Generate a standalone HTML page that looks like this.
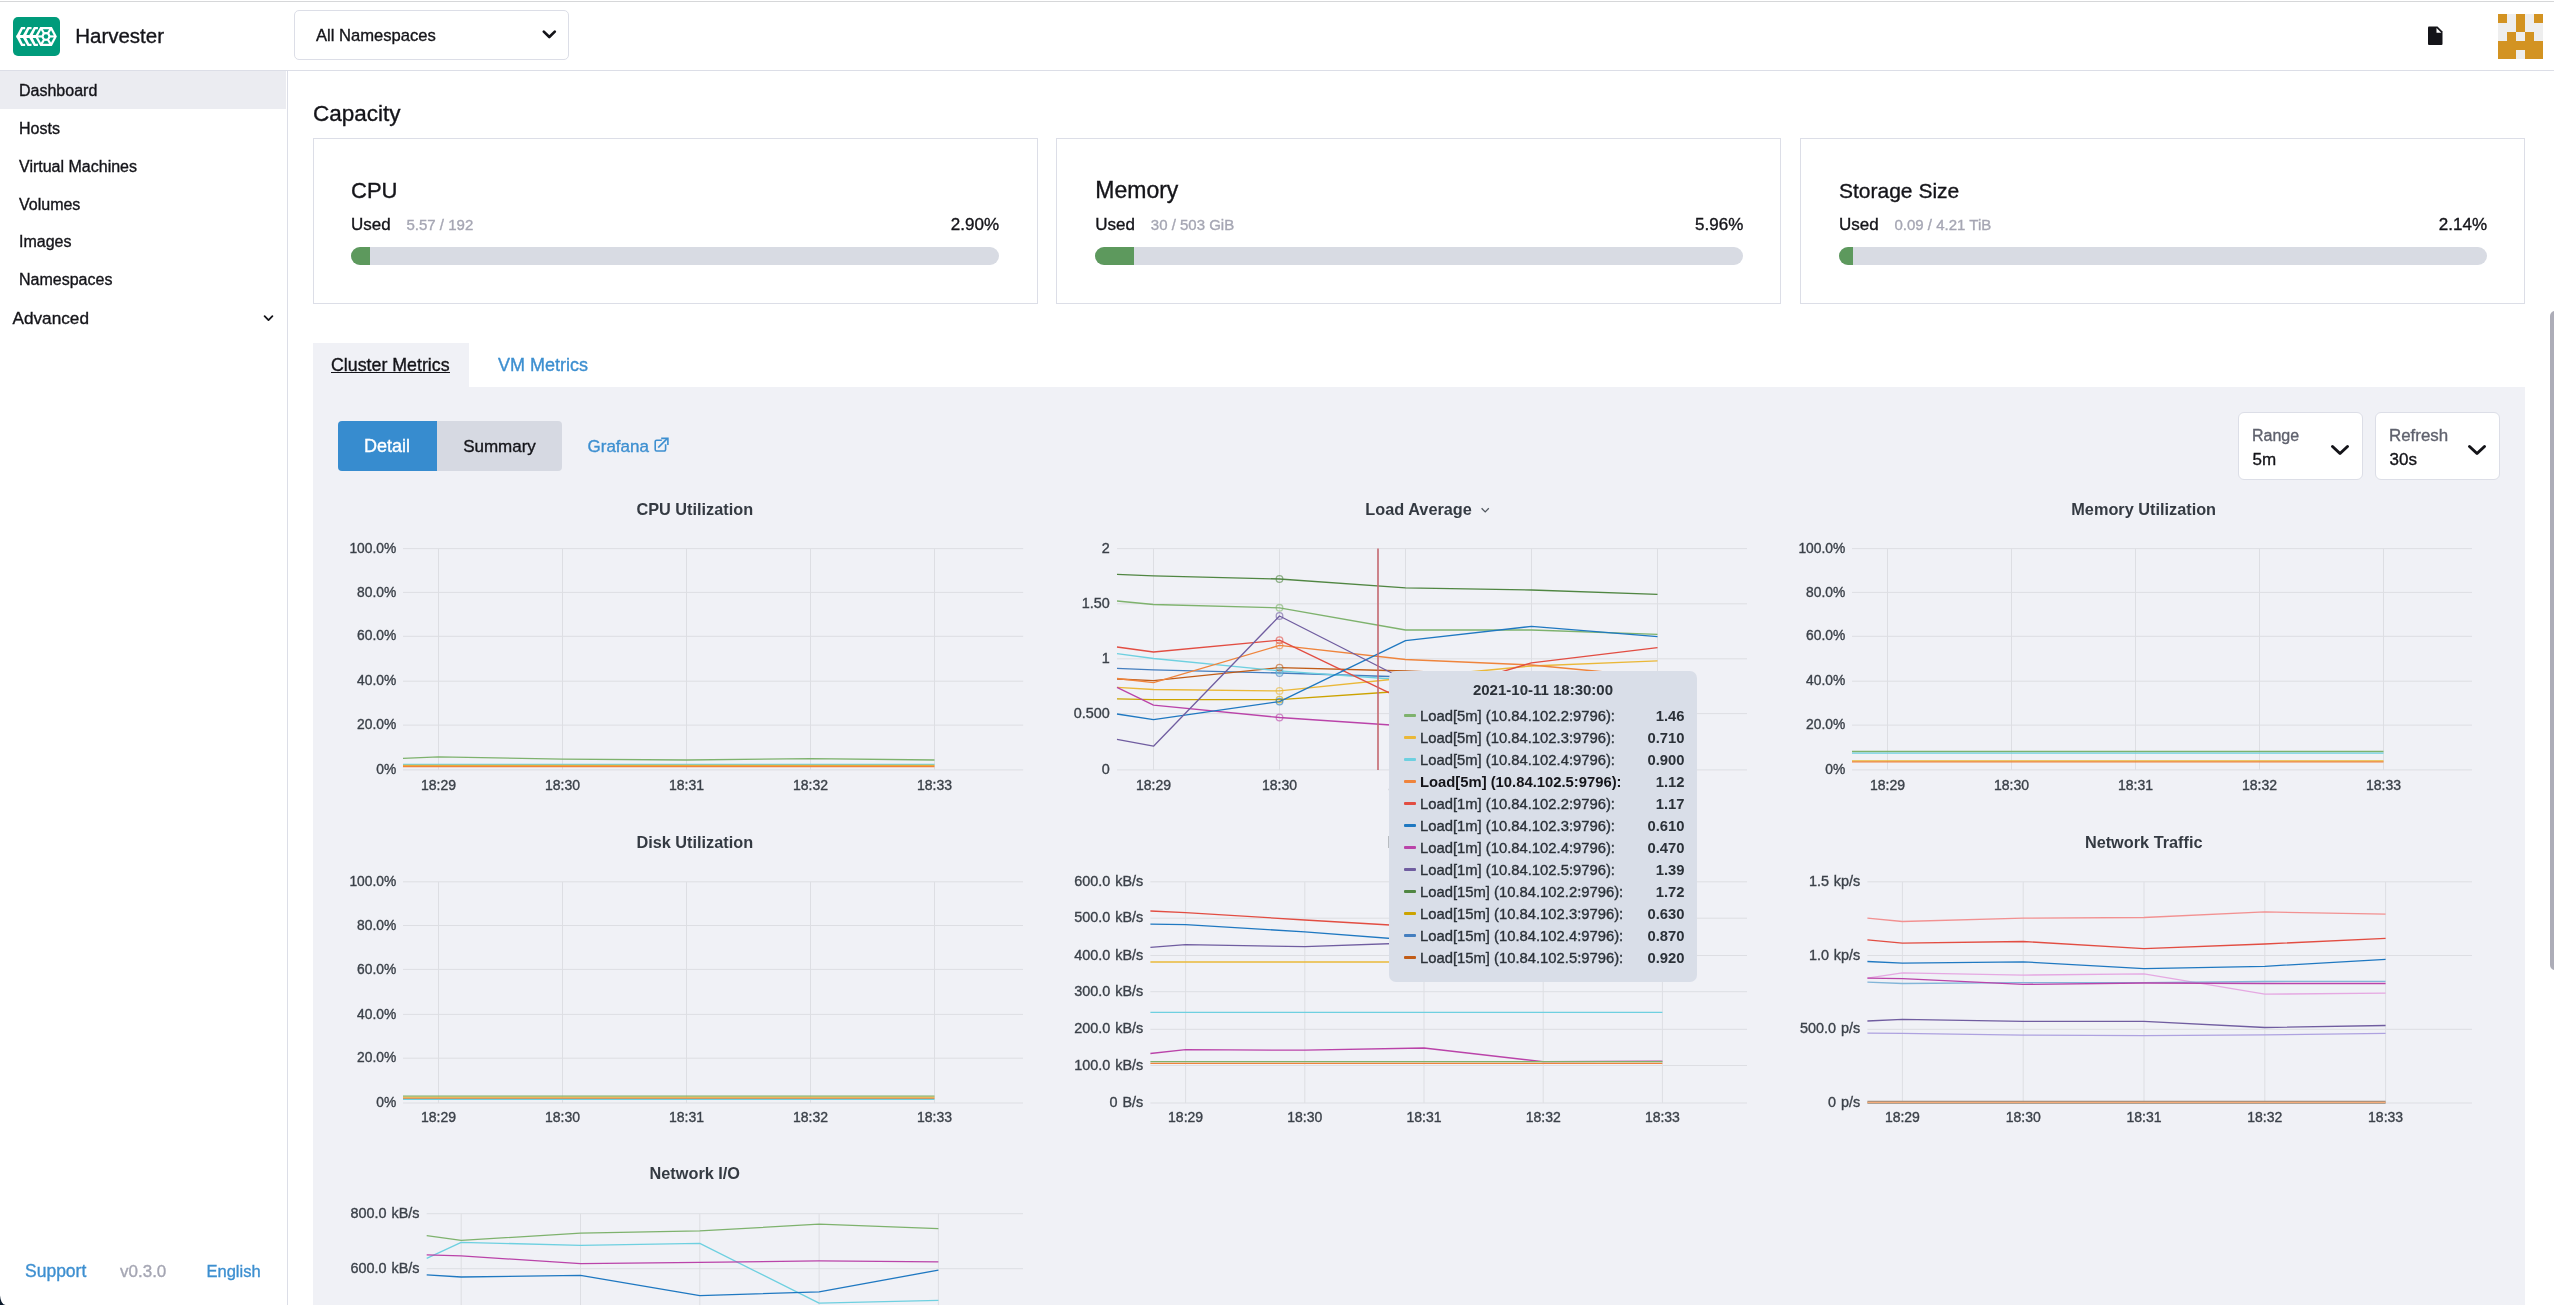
<!DOCTYPE html>
<html><head><meta charset="utf-8"><title>Harvester Dashboard</title>
<style>
html,body{margin:0;padding:0;}
body{width:2554px;height:1305px;overflow:hidden;position:relative;background:#fff;font-family:"Liberation Sans", sans-serif;}
svg text{font-family:"Liberation Sans", sans-serif;}
</style></head><body>
<div style="position:absolute;left:0px;top:1px;width:2554px;height:1px;background:#D6D7D9"></div><div style="position:absolute;left:0px;top:70px;width:2554px;height:1px;background:#DCDEE7"></div><div style="position:absolute;left:294px;top:10px;width:273px;height:48px;border:1px solid #DCDEE7;border-radius:5px;background:#fff"></div><div style="position:absolute;left:2498px;top:14px;width:9px;height:9px;background:#D39322"></div><div style="position:absolute;left:2507px;top:14px;width:9px;height:9px;background:#EEEEEE"></div><div style="position:absolute;left:2516px;top:14px;width:9px;height:9px;background:#D39322"></div><div style="position:absolute;left:2525px;top:14px;width:9px;height:9px;background:#EEEEEE"></div><div style="position:absolute;left:2534px;top:14px;width:9px;height:9px;background:#D39322"></div><div style="position:absolute;left:2498px;top:23px;width:9px;height:9px;background:#EEEEEE"></div><div style="position:absolute;left:2507px;top:23px;width:9px;height:9px;background:#EEEEEE"></div><div style="position:absolute;left:2516px;top:23px;width:9px;height:9px;background:#D39322"></div><div style="position:absolute;left:2525px;top:23px;width:9px;height:9px;background:#EEEEEE"></div><div style="position:absolute;left:2534px;top:23px;width:9px;height:9px;background:#EEEEEE"></div><div style="position:absolute;left:2498px;top:32px;width:9px;height:9px;background:#EEEEEE"></div><div style="position:absolute;left:2507px;top:32px;width:9px;height:9px;background:#D39322"></div><div style="position:absolute;left:2516px;top:32px;width:9px;height:9px;background:#EEEEEE"></div><div style="position:absolute;left:2525px;top:32px;width:9px;height:9px;background:#D39322"></div><div style="position:absolute;left:2534px;top:32px;width:9px;height:9px;background:#EEEEEE"></div><div style="position:absolute;left:2498px;top:41px;width:9px;height:9px;background:#D39322"></div><div style="position:absolute;left:2507px;top:41px;width:9px;height:9px;background:#D39322"></div><div style="position:absolute;left:2516px;top:41px;width:9px;height:9px;background:#D39322"></div><div style="position:absolute;left:2525px;top:41px;width:9px;height:9px;background:#D39322"></div><div style="position:absolute;left:2534px;top:41px;width:9px;height:9px;background:#D39322"></div><div style="position:absolute;left:2498px;top:50px;width:9px;height:9px;background:#D39322"></div><div style="position:absolute;left:2507px;top:50px;width:9px;height:9px;background:#D39322"></div><div style="position:absolute;left:2516px;top:50px;width:9px;height:9px;background:#EEEEEE"></div><div style="position:absolute;left:2525px;top:50px;width:9px;height:9px;background:#D39322"></div><div style="position:absolute;left:2534px;top:50px;width:9px;height:9px;background:#D39322"></div><div style="position:absolute;left:287px;top:71px;width:1px;height:1234px;background:#DCDEE7"></div><div style="position:absolute;left:0px;top:71px;width:286px;height:38px;background:#EBECF1"></div><div style="position:absolute;left:313px;top:138px;width:725px;height:166px;border:1px solid #DCDEE7;box-sizing:border-box;background:#fff"></div><div style="position:absolute;left:351px;top:247px;width:648px;height:18px;background:#D8DBE3;border-radius:9px"></div><div style="position:absolute;left:351px;top:247px;width:19px;height:18px;background:#5D995D;border-radius:9px 0 0 9px"></div><div style="position:absolute;left:1056px;top:138px;width:725px;height:166px;border:1px solid #DCDEE7;box-sizing:border-box;background:#fff"></div><div style="position:absolute;left:1095.3px;top:247px;width:648px;height:18px;background:#D8DBE3;border-radius:9px"></div><div style="position:absolute;left:1095.3px;top:247px;width:38.700000000000045px;height:18px;background:#5D995D;border-radius:9px 0 0 9px"></div><div style="position:absolute;left:1800px;top:138px;width:725px;height:166px;border:1px solid #DCDEE7;box-sizing:border-box;background:#fff"></div><div style="position:absolute;left:1839px;top:247px;width:648px;height:18px;background:#D8DBE3;border-radius:9px"></div><div style="position:absolute;left:1839px;top:247px;width:14px;height:18px;background:#5D995D;border-radius:9px 0 0 9px"></div><div style="position:absolute;left:313px;top:343px;width:156px;height:44px;background:#F0F1F6"></div><div style="position:absolute;left:313px;top:387px;width:2212px;height:918px;background:#F0F1F6"></div><div style="position:absolute;left:331px;top:372px;width:119px;height:1.3px;background:#141419"></div><div style="position:absolute;left:338px;top:421px;width:99px;height:50px;background:#378CCF;border-radius:4px 0 0 4px"></div><div style="position:absolute;left:437px;top:421px;width:125px;height:50px;background:#D6D9E2;border-radius:0 4px 4px 0"></div><div style="position:absolute;left:2238px;top:412px;width:125px;height:68px;border:1px solid #DCDEE7;box-sizing:border-box;border-radius:6px;background:#fff"></div><div style="position:absolute;left:2375px;top:412px;width:125px;height:68px;border:1px solid #DCDEE7;box-sizing:border-box;border-radius:6px;background:#fff"></div><div style="position:absolute;left:2550px;top:311px;width:10px;height:659px;background:#ADADB8;border-radius:5px"></div>
<svg width="2554" height="1305" viewBox="0 0 2554 1305" style="position:absolute;left:0;top:0;will-change:transform">
<g transform="translate(13,17)">
<rect x="0" y="0" width="47" height="39" rx="5" fill="#009B7B"/>
<polygon points="3.1,19.45 8.17,10 38.86,10 43.85,19.45 38.86,28.92 8.17,28.92" fill="#fff"/>
<polygon points="12.16,10.00 14.55,10.00 9.97,17.96 6.98,17.96 9.77,12.18 12.16,12.18" fill="#009B7B"/>
<polygon points="12.16,28.92 14.55,28.92 9.97,20.96 6.98,20.96 9.77,26.74 12.16,26.74" fill="#009B7B"/>
<polygon points="18.54,10.00 20.93,10.00 16.35,17.96 13.36,17.96 16.15,12.18 18.54,12.18" fill="#009B7B"/>
<polygon points="18.54,28.92 20.93,28.92 16.35,20.96 13.36,20.96 16.15,26.74 18.54,26.74" fill="#009B7B"/>
<polygon points="24.91,10.00 27.30,10.00 22.72,17.96 19.73,17.96 22.52,12.18 24.91,12.18" fill="#009B7B"/>
<polygon points="24.91,28.92 27.30,28.92 22.72,20.96 19.73,20.96 22.52,26.74 24.91,26.74" fill="#009B7B"/>
<polygon points="28.46,12.2 37.5,12.2 41.35,19.45 37.5,26.7 28.46,26.7 24.6,19.45" fill="#009B7B"/>
<g stroke="#fff" stroke-width="2.2"><line x1="32.98" y1="19.45" x2="27.6" y2="10.5"/><line x1="32.98" y1="19.45" x2="38.4" y2="10.5"/><line x1="32.98" y1="19.45" x2="43" y2="19.45"/><line x1="32.98" y1="19.45" x2="3.5" y2="19.45"/><line x1="32.98" y1="19.45" x2="27.6" y2="28.4"/><line x1="32.98" y1="19.45" x2="38.4" y2="28.4"/></g>
<circle cx="32.98" cy="19.45" r="4.45" fill="#fff"/>
<circle cx="32.98" cy="19.45" r="2.25" fill="#009B7B"/>
</g>
<text x="75.2" y="42.8" font-size="20.5" fill="#141419" stroke="#141419" stroke-width="0.35" font-weight="400" text-anchor="start" >Harvester</text>
<text x="316" y="40.7" font-size="16.6" fill="#141419" stroke="#141419" stroke-width="0.35" font-weight="400" text-anchor="start" >All Namespaces</text>
<polyline points="543.8,31.6 549.3,37 554.8,31.6" fill="none" stroke="#141419" stroke-width="2.7" stroke-linecap="round" stroke-linejoin="round"/>
<path d="M2429,26.5 h8.5 l5,5 v12.5 a1,1 0 0 1 -1,1 h-12.5 a1,1 0 0 1 -1,-1 v-16.5 a1,1 0 0 1 1,-1 z" fill="#141419"/>
<path d="M2436.5,28 v4.8 h4.8 z" fill="#fff"/>
<text x="19" y="95.8" font-size="16" fill="#141419" stroke="#141419" stroke-width="0.35" font-weight="400" text-anchor="start" >Dashboard</text>
<text x="19" y="133.7" font-size="16" fill="#141419" stroke="#141419" stroke-width="0.35" font-weight="400" text-anchor="start" >Hosts</text>
<text x="19" y="171.6" font-size="16" fill="#141419" stroke="#141419" stroke-width="0.35" font-weight="400" text-anchor="start" >Virtual Machines</text>
<text x="19" y="209.5" font-size="16" fill="#141419" stroke="#141419" stroke-width="0.35" font-weight="400" text-anchor="start" >Volumes</text>
<text x="19" y="247.39999999999998" font-size="16" fill="#141419" stroke="#141419" stroke-width="0.35" font-weight="400" text-anchor="start" >Images</text>
<text x="19" y="285.3" font-size="16" fill="#141419" stroke="#141419" stroke-width="0.35" font-weight="400" text-anchor="start" >Namespaces</text>
<text x="12.5" y="324" font-size="17.2" fill="#141419" stroke="#141419" stroke-width="0.35" font-weight="400" text-anchor="start" >Advanced</text>
<polyline points="264.6,316.2 268.5,320.1 272.4,316.2" fill="none" stroke="#141419" stroke-width="1.8" stroke-linecap="round" stroke-linejoin="round"/>
<text x="25" y="1277" font-size="17.5" fill="#3D8FD0" stroke="#3D8FD0" stroke-width="0.35" font-weight="400" text-anchor="start" >Support</text>
<text x="120" y="1277" font-size="17" fill="#A5A6B3" stroke="#A5A6B3" stroke-width="0.35" font-weight="400" text-anchor="start" >v0.3.0</text>
<text x="206.5" y="1277" font-size="16.5" fill="#3D8FD0" stroke="#3D8FD0" stroke-width="0.35" font-weight="400" text-anchor="start" >English</text>
<path d="M0,1295.5 Q0.8,1304.4 5.5,1305 L0,1305 Z" fill="#0B1A2B"/>
<text x="313" y="120.9" font-size="22.5" fill="#141419" stroke="#141419" stroke-width="0.35" font-weight="400" text-anchor="start" >Capacity</text>
<text x="351" y="198.2" font-size="22" fill="#141419" stroke="#141419" stroke-width="0.35" font-weight="400" text-anchor="start" >CPU</text>
<text x="351" y="230.3" font-size="17" fill="#141419" stroke="#141419" stroke-width="0.35" font-weight="400" text-anchor="start" >Used</text>
<text x="406.5" y="230.3" font-size="15" fill="#A5A6B3" stroke="#A5A6B3" stroke-width="0.35" font-weight="400" text-anchor="start" >5.57 / 192</text>
<text x="999" y="230.3" font-size="17" fill="#141419" stroke="#141419" stroke-width="0.35" font-weight="400" text-anchor="end" >2.90%</text>
<text x="1095.3" y="198.2" font-size="23" fill="#141419" stroke="#141419" stroke-width="0.35" font-weight="400" text-anchor="start" >Memory</text>
<text x="1095.3" y="230.3" font-size="17" fill="#141419" stroke="#141419" stroke-width="0.35" font-weight="400" text-anchor="start" >Used</text>
<text x="1150.8" y="230.3" font-size="15" fill="#A5A6B3" stroke="#A5A6B3" stroke-width="0.35" font-weight="400" text-anchor="start" >30 / 503 GiB</text>
<text x="1743.3" y="230.3" font-size="17" fill="#141419" stroke="#141419" stroke-width="0.35" font-weight="400" text-anchor="end" >5.96%</text>
<text x="1839" y="198.2" font-size="21" fill="#141419" stroke="#141419" stroke-width="0.35" font-weight="400" text-anchor="start" >Storage Size</text>
<text x="1839" y="230.3" font-size="17" fill="#141419" stroke="#141419" stroke-width="0.35" font-weight="400" text-anchor="start" >Used</text>
<text x="1894.5" y="230.3" font-size="15" fill="#A5A6B3" stroke="#A5A6B3" stroke-width="0.35" font-weight="400" text-anchor="start" >0.09 / 4.21 TiB</text>
<text x="2487" y="230.3" font-size="17" fill="#141419" stroke="#141419" stroke-width="0.35" font-weight="400" text-anchor="end" >2.14%</text>
<text x="331" y="371.2" font-size="17.8" fill="#141419" stroke="#141419" stroke-width="0.35" font-weight="400" text-anchor="start" >Cluster Metrics</text>
<text x="498" y="371.2" font-size="18" fill="#3D8FD0" stroke="#3D8FD0" stroke-width="0.35" font-weight="400" text-anchor="start" >VM Metrics</text>
<text x="387" y="452.3" font-size="18" fill="#fff" stroke="#fff" stroke-width="0.35" font-weight="400" text-anchor="middle" >Detail</text>
<text x="499.5" y="452.3" font-size="17" fill="#141419" stroke="#141419" stroke-width="0.35" font-weight="400" text-anchor="middle" >Summary</text>
<text x="587.5" y="452.3" font-size="17" fill="#3D8FD0" stroke="#3D8FD0" stroke-width="0.35" font-weight="400" text-anchor="start" >Grafana</text>
<g fill="none" stroke="#3D8FD0" stroke-width="1.6" stroke-linecap="butt"><path d="M661.8,440.2 H656.6 a1.4,1.4 0 0 0 -1.4,1.4 V449.6 a1.4,1.4 0 0 0 1.4,1.4 H664.2 a1.4,1.4 0 0 0 1.4,-1.4 V444.2"/><path d="M658.2,447.6 L667.2,438.6"/><path d="M661.2,438.4 H667.9 V445"/></g>
<text x="2252" y="441" font-size="16" fill="#5F616D" stroke="#5F616D" stroke-width="0.35" font-weight="400" text-anchor="start" >Range</text>
<text x="2252.5" y="465" font-size="17" fill="#141419" stroke="#141419" stroke-width="0.35" font-weight="400" text-anchor="start" >5m</text>
<polyline points="2332.5,446.5 2340,453.5 2347.5,446.5" fill="none" stroke="#141419" stroke-width="3" stroke-linecap="round" stroke-linejoin="round"/>
<text x="2389" y="441" font-size="16.9" fill="#5F616D" stroke="#5F616D" stroke-width="0.35" font-weight="400" text-anchor="start" >Refresh</text>
<text x="2389.5" y="465" font-size="17" fill="#141419" stroke="#141419" stroke-width="0.35" font-weight="400" text-anchor="start" >30s</text>
<polyline points="2469.5,446.5 2477,453.5 2484.5,446.5" fill="none" stroke="#141419" stroke-width="3" stroke-linecap="round" stroke-linejoin="round"/>
<text x="694.8" y="514.5" font-size="16.3" fill="#343A42" stroke="#343A42" stroke-width="0" font-weight="700" text-anchor="middle" >CPU Utilization</text>
<line x1="403" y1="548.6" x2="1023.2" y2="548.6" stroke="#DDDEE3" stroke-width="1" />
<text x="396.2" y="552.7" font-size="13.8" fill="#3B4149" stroke="#3B4149" stroke-width="0.35" font-weight="400" text-anchor="end" >100.0%</text>
<line x1="403" y1="592.4" x2="1023.2" y2="592.4" stroke="#DDDEE3" stroke-width="1" />
<text x="396.2" y="596.5" font-size="13.8" fill="#3B4149" stroke="#3B4149" stroke-width="0.35" font-weight="400" text-anchor="end" >80.0%</text>
<line x1="403" y1="636.3" x2="1023.2" y2="636.3" stroke="#DDDEE3" stroke-width="1" />
<text x="396.2" y="640.4" font-size="13.8" fill="#3B4149" stroke="#3B4149" stroke-width="0.35" font-weight="400" text-anchor="end" >60.0%</text>
<line x1="403" y1="681.2" x2="1023.2" y2="681.2" stroke="#DDDEE3" stroke-width="1" />
<text x="396.2" y="685.3000000000001" font-size="13.8" fill="#3B4149" stroke="#3B4149" stroke-width="0.35" font-weight="400" text-anchor="end" >40.0%</text>
<line x1="403" y1="725.1" x2="1023.2" y2="725.1" stroke="#DDDEE3" stroke-width="1" />
<text x="396.2" y="729.2" font-size="13.8" fill="#3B4149" stroke="#3B4149" stroke-width="0.35" font-weight="400" text-anchor="end" >20.0%</text>
<line x1="403" y1="769.9" x2="1023.2" y2="769.9" stroke="#DDDEE3" stroke-width="1" />
<text x="396.2" y="774.0" font-size="13.8" fill="#3B4149" stroke="#3B4149" stroke-width="0.35" font-weight="400" text-anchor="end" >0%</text>
<line x1="438.5" y1="548.6" x2="438.5" y2="769.9" stroke="#DDDEE3" stroke-width="1" />
<text x="438.5" y="790.3" font-size="14" fill="#3B4149" stroke="#3B4149" stroke-width="0.35" font-weight="400" text-anchor="middle" >18:29</text>
<line x1="562.5" y1="548.6" x2="562.5" y2="769.9" stroke="#DDDEE3" stroke-width="1" />
<text x="562.5" y="790.3" font-size="14" fill="#3B4149" stroke="#3B4149" stroke-width="0.35" font-weight="400" text-anchor="middle" >18:30</text>
<line x1="686.5" y1="548.6" x2="686.5" y2="769.9" stroke="#DDDEE3" stroke-width="1" />
<text x="686.5" y="790.3" font-size="14" fill="#3B4149" stroke="#3B4149" stroke-width="0.35" font-weight="400" text-anchor="middle" >18:31</text>
<line x1="810.5" y1="548.6" x2="810.5" y2="769.9" stroke="#DDDEE3" stroke-width="1" />
<text x="810.5" y="790.3" font-size="14" fill="#3B4149" stroke="#3B4149" stroke-width="0.35" font-weight="400" text-anchor="middle" >18:32</text>
<line x1="934.5" y1="548.6" x2="934.5" y2="769.9" stroke="#DDDEE3" stroke-width="1" />
<text x="934.5" y="790.3" font-size="14" fill="#3B4149" stroke="#3B4149" stroke-width="0.35" font-weight="400" text-anchor="middle" >18:33</text>
<polyline points="403.0,758.3 438.5,756.9 562.5,759.1 686.5,760.0 810.5,758.6 934.5,760.0" fill="none" stroke="#7EB26D" stroke-width="1.3" stroke-linejoin="round" />
<polyline points="403.0,764.4 438.5,764.4 562.5,764.4 686.5,764.4 810.5,764.4 934.5,764.4" fill="none" stroke="#6ED0E0" stroke-width="1.3" stroke-linejoin="round" />
<polyline points="403.0,765.4 438.5,765.4 562.5,765.4 686.5,765.4 810.5,765.4 934.5,765.4" fill="none" stroke="#EAB839" stroke-width="1.1" stroke-linejoin="round" />
<polyline points="403.0,766.5 438.5,766.5 562.5,766.5 686.5,766.5 810.5,766.5 934.5,766.5" fill="none" stroke="#EF843C" stroke-width="1.3" stroke-linejoin="round" />
<text x="694.8" y="847.8" font-size="16.3" fill="#343A42" stroke="#343A42" stroke-width="0" font-weight="700" text-anchor="middle" >Disk Utilization</text>
<line x1="403" y1="881.8" x2="1023" y2="881.8" stroke="#DDDEE3" stroke-width="1" />
<text x="396.2" y="885.9" font-size="13.8" fill="#3B4149" stroke="#3B4149" stroke-width="0.35" font-weight="400" text-anchor="end" >100.0%</text>
<line x1="403" y1="925.5" x2="1023" y2="925.5" stroke="#DDDEE3" stroke-width="1" />
<text x="396.2" y="929.6" font-size="13.8" fill="#3B4149" stroke="#3B4149" stroke-width="0.35" font-weight="400" text-anchor="end" >80.0%</text>
<line x1="403" y1="969.4" x2="1023" y2="969.4" stroke="#DDDEE3" stroke-width="1" />
<text x="396.2" y="973.5" font-size="13.8" fill="#3B4149" stroke="#3B4149" stroke-width="0.35" font-weight="400" text-anchor="end" >60.0%</text>
<line x1="403" y1="1014.4" x2="1023" y2="1014.4" stroke="#DDDEE3" stroke-width="1" />
<text x="396.2" y="1018.5" font-size="13.8" fill="#3B4149" stroke="#3B4149" stroke-width="0.35" font-weight="400" text-anchor="end" >40.0%</text>
<line x1="403" y1="1058.2" x2="1023" y2="1058.2" stroke="#DDDEE3" stroke-width="1" />
<text x="396.2" y="1062.3" font-size="13.8" fill="#3B4149" stroke="#3B4149" stroke-width="0.35" font-weight="400" text-anchor="end" >20.0%</text>
<line x1="403" y1="1103" x2="1023" y2="1103" stroke="#DDDEE3" stroke-width="1" />
<text x="396.2" y="1107.1" font-size="13.8" fill="#3B4149" stroke="#3B4149" stroke-width="0.35" font-weight="400" text-anchor="end" >0%</text>
<line x1="438.5" y1="881.8" x2="438.5" y2="1103" stroke="#DDDEE3" stroke-width="1" />
<text x="438.5" y="1122.3" font-size="14" fill="#3B4149" stroke="#3B4149" stroke-width="0.35" font-weight="400" text-anchor="middle" >18:29</text>
<line x1="562.5" y1="881.8" x2="562.5" y2="1103" stroke="#DDDEE3" stroke-width="1" />
<text x="562.5" y="1122.3" font-size="14" fill="#3B4149" stroke="#3B4149" stroke-width="0.35" font-weight="400" text-anchor="middle" >18:30</text>
<line x1="686.5" y1="881.8" x2="686.5" y2="1103" stroke="#DDDEE3" stroke-width="1" />
<text x="686.5" y="1122.3" font-size="14" fill="#3B4149" stroke="#3B4149" stroke-width="0.35" font-weight="400" text-anchor="middle" >18:31</text>
<line x1="810.5" y1="881.8" x2="810.5" y2="1103" stroke="#DDDEE3" stroke-width="1" />
<text x="810.5" y="1122.3" font-size="14" fill="#3B4149" stroke="#3B4149" stroke-width="0.35" font-weight="400" text-anchor="middle" >18:32</text>
<line x1="934.5" y1="881.8" x2="934.5" y2="1103" stroke="#DDDEE3" stroke-width="1" />
<text x="934.5" y="1122.3" font-size="14" fill="#3B4149" stroke="#3B4149" stroke-width="0.35" font-weight="400" text-anchor="middle" >18:33</text>
<polyline points="403.0,1096.2 438.5,1096.2 562.5,1096.2 686.5,1096.2 810.5,1096.2 934.5,1096.2" fill="none" stroke="#7EB26D" stroke-width="1.2" stroke-linejoin="round" />
<polyline points="403.0,1097.2 438.5,1097.2 562.5,1097.2 686.5,1097.2 810.5,1097.2 934.5,1097.2" fill="none" stroke="#EAB839" stroke-width="1.1" stroke-linejoin="round" />
<polyline points="403.0,1098.3 438.5,1098.3 562.5,1098.3 686.5,1098.3 810.5,1098.3 934.5,1098.3" fill="none" stroke="#EF843C" stroke-width="1.2" stroke-linejoin="round" />
<polyline points="403.0,1099.4 438.5,1099.4 562.5,1099.4 686.5,1099.4 810.5,1099.4 934.5,1099.4" fill="none" stroke="#6ED0E0" stroke-width="1.1" stroke-linejoin="round" />
<text x="694.8" y="1179" font-size="16.3" fill="#343A42" stroke="#343A42" stroke-width="0" font-weight="700" text-anchor="middle" >Network I/O</text>
<line x1="426.7" y1="1213.7" x2="1023" y2="1213.7" stroke="#DDDEE3" stroke-width="1" />
<text x="419.5" y="1217.7" font-size="14.4" fill="#3B4149" stroke="#3B4149" stroke-width="0.35" font-weight="400" text-anchor="end" word-spacing="0.9">800.0 kB/s</text>
<line x1="426.7" y1="1268.7" x2="1023" y2="1268.7" stroke="#DDDEE3" stroke-width="1" />
<text x="419.5" y="1272.7" font-size="14.4" fill="#3B4149" stroke="#3B4149" stroke-width="0.35" font-weight="400" text-anchor="end" word-spacing="0.9">600.0 kB/s</text>
<line x1="426.7" y1="1323.7" x2="1023" y2="1323.7" stroke="#DDDEE3" stroke-width="1" />
<text x="419.5" y="1327.7" font-size="14.4" fill="#3B4149" stroke="#3B4149" stroke-width="0.35" font-weight="400" text-anchor="end" word-spacing="0.9">400.0 kB/s</text>
<line x1="426.7" y1="1378.7" x2="1023" y2="1378.7" stroke="#DDDEE3" stroke-width="1" />
<text x="419.5" y="1382.7" font-size="14.4" fill="#3B4149" stroke="#3B4149" stroke-width="0.35" font-weight="400" text-anchor="end" word-spacing="0.9">200.0 kB/s</text>
<line x1="426.7" y1="1433.7" x2="1023" y2="1433.7" stroke="#DDDEE3" stroke-width="1" />
<text x="419.5" y="1437.7" font-size="14.4" fill="#3B4149" stroke="#3B4149" stroke-width="0.35" font-weight="400" text-anchor="end" word-spacing="0.9">0 B/s</text>
<line x1="461.2" y1="1213.7" x2="461.2" y2="1305" stroke="#DDDEE3" stroke-width="1" />
<line x1="580.5" y1="1213.7" x2="580.5" y2="1305" stroke="#DDDEE3" stroke-width="1" />
<line x1="699.8" y1="1213.7" x2="699.8" y2="1305" stroke="#DDDEE3" stroke-width="1" />
<line x1="819.0999999999999" y1="1213.7" x2="819.0999999999999" y2="1305" stroke="#DDDEE3" stroke-width="1" />
<line x1="938.4" y1="1213.7" x2="938.4" y2="1305" stroke="#DDDEE3" stroke-width="1" />
<polyline points="426.7,1235.6 461.2,1240.4 580.5,1233.1 699.8,1230.9 819.1,1224.2 938.4,1228.7" fill="none" stroke="#7EB26D" stroke-width="1.3" stroke-linejoin="round" />
<polyline points="426.7,1258.4 461.2,1242.3 580.5,1245.4 699.8,1243.4 819.1,1303.2 938.4,1300.4" fill="none" stroke="#6ED0E0" stroke-width="1.3" stroke-linejoin="round" />
<polyline points="426.7,1254.8 461.2,1255.9 580.5,1263.7 699.8,1262.3 819.1,1260.9 938.4,1261.8" fill="none" stroke="#BA43A9" stroke-width="1.3" stroke-linejoin="round" />
<polyline points="426.7,1274.8 461.2,1277.0 580.5,1275.4 699.8,1295.7 819.1,1291.8 938.4,1270.1" fill="none" stroke="#1F78C1" stroke-width="1.3" stroke-linejoin="round" />
<text x="2143.7" y="514.5" font-size="16.3" fill="#343A42" stroke="#343A42" stroke-width="0" font-weight="700" text-anchor="middle" >Memory Utilization</text>
<line x1="1852" y1="548.6" x2="2472" y2="548.6" stroke="#DDDEE3" stroke-width="1" />
<text x="1845.2" y="552.7" font-size="13.8" fill="#3B4149" stroke="#3B4149" stroke-width="0.35" font-weight="400" text-anchor="end" >100.0%</text>
<line x1="1852" y1="592.4" x2="2472" y2="592.4" stroke="#DDDEE3" stroke-width="1" />
<text x="1845.2" y="596.5" font-size="13.8" fill="#3B4149" stroke="#3B4149" stroke-width="0.35" font-weight="400" text-anchor="end" >80.0%</text>
<line x1="1852" y1="636.3" x2="2472" y2="636.3" stroke="#DDDEE3" stroke-width="1" />
<text x="1845.2" y="640.4" font-size="13.8" fill="#3B4149" stroke="#3B4149" stroke-width="0.35" font-weight="400" text-anchor="end" >60.0%</text>
<line x1="1852" y1="681.2" x2="2472" y2="681.2" stroke="#DDDEE3" stroke-width="1" />
<text x="1845.2" y="685.3000000000001" font-size="13.8" fill="#3B4149" stroke="#3B4149" stroke-width="0.35" font-weight="400" text-anchor="end" >40.0%</text>
<line x1="1852" y1="725.1" x2="2472" y2="725.1" stroke="#DDDEE3" stroke-width="1" />
<text x="1845.2" y="729.2" font-size="13.8" fill="#3B4149" stroke="#3B4149" stroke-width="0.35" font-weight="400" text-anchor="end" >20.0%</text>
<line x1="1852" y1="769.9" x2="2472" y2="769.9" stroke="#DDDEE3" stroke-width="1" />
<text x="1845.2" y="774.0" font-size="13.8" fill="#3B4149" stroke="#3B4149" stroke-width="0.35" font-weight="400" text-anchor="end" >0%</text>
<line x1="1887.5" y1="548.6" x2="1887.5" y2="769.9" stroke="#DDDEE3" stroke-width="1" />
<text x="1887.5" y="790.3" font-size="14" fill="#3B4149" stroke="#3B4149" stroke-width="0.35" font-weight="400" text-anchor="middle" >18:29</text>
<line x1="2011.5" y1="548.6" x2="2011.5" y2="769.9" stroke="#DDDEE3" stroke-width="1" />
<text x="2011.5" y="790.3" font-size="14" fill="#3B4149" stroke="#3B4149" stroke-width="0.35" font-weight="400" text-anchor="middle" >18:30</text>
<line x1="2135.5" y1="548.6" x2="2135.5" y2="769.9" stroke="#DDDEE3" stroke-width="1" />
<text x="2135.5" y="790.3" font-size="14" fill="#3B4149" stroke="#3B4149" stroke-width="0.35" font-weight="400" text-anchor="middle" >18:31</text>
<line x1="2259.5" y1="548.6" x2="2259.5" y2="769.9" stroke="#DDDEE3" stroke-width="1" />
<text x="2259.5" y="790.3" font-size="14" fill="#3B4149" stroke="#3B4149" stroke-width="0.35" font-weight="400" text-anchor="middle" >18:32</text>
<line x1="2383.5" y1="548.6" x2="2383.5" y2="769.9" stroke="#DDDEE3" stroke-width="1" />
<text x="2383.5" y="790.3" font-size="14" fill="#3B4149" stroke="#3B4149" stroke-width="0.35" font-weight="400" text-anchor="middle" >18:33</text>
<polyline points="1852.0,751.6 1887.5,751.6 2011.5,751.6 2135.5,751.6 2259.5,751.6 2383.5,751.6" fill="none" stroke="#7EB26D" stroke-width="1.5" stroke-linejoin="round" />
<polyline points="1852.0,753.1 1887.5,753.1 2011.5,753.1 2135.5,753.1 2259.5,753.1 2383.5,753.1" fill="none" stroke="#6ED0E0" stroke-width="1.4" stroke-linejoin="round" />
<polyline points="1852.0,760.8 1887.5,760.8 2011.5,760.8 2135.5,760.8 2259.5,760.8 2383.5,760.8" fill="none" stroke="#EAB839" stroke-width="1.3" stroke-linejoin="round" />
<polyline points="1852.0,761.8 1887.5,761.8 2011.5,761.8 2135.5,761.8 2259.5,761.8 2383.5,761.8" fill="none" stroke="#EF843C" stroke-width="1.3" stroke-linejoin="round" />
<text x="2143.7" y="848.2" font-size="16.3" fill="#343A42" stroke="#343A42" stroke-width="0" font-weight="700" text-anchor="middle" >Network Traffic</text>
<line x1="1867.4" y1="881.8" x2="2472" y2="881.8" stroke="#DDDEE3" stroke-width="1" />
<text x="1860.2" y="885.8" font-size="14.4" fill="#3B4149" stroke="#3B4149" stroke-width="0.35" font-weight="400" text-anchor="end" word-spacing="0.9">1.5 kp/s</text>
<line x1="1867.4" y1="955.5" x2="2472" y2="955.5" stroke="#DDDEE3" stroke-width="1" />
<text x="1860.2" y="959.5" font-size="14.4" fill="#3B4149" stroke="#3B4149" stroke-width="0.35" font-weight="400" text-anchor="end" word-spacing="0.9">1.0 kp/s</text>
<line x1="1867.4" y1="1029.3" x2="2472" y2="1029.3" stroke="#DDDEE3" stroke-width="1" />
<text x="1860.2" y="1033.3" font-size="14.4" fill="#3B4149" stroke="#3B4149" stroke-width="0.35" font-weight="400" text-anchor="end" word-spacing="0.9">500.0 p/s</text>
<line x1="1867.4" y1="1103" x2="2472" y2="1103" stroke="#DDDEE3" stroke-width="1" />
<text x="1860.2" y="1107.0" font-size="14.4" fill="#3B4149" stroke="#3B4149" stroke-width="0.35" font-weight="400" text-anchor="end" word-spacing="0.9">0 p/s</text>
<line x1="1902.4" y1="881.8" x2="1902.4" y2="1103" stroke="#DDDEE3" stroke-width="1" />
<text x="1902.4" y="1122.3" font-size="14" fill="#3B4149" stroke="#3B4149" stroke-width="0.35" font-weight="400" text-anchor="middle" >18:29</text>
<line x1="2023.2" y1="881.8" x2="2023.2" y2="1103" stroke="#DDDEE3" stroke-width="1" />
<text x="2023.2" y="1122.3" font-size="14" fill="#3B4149" stroke="#3B4149" stroke-width="0.35" font-weight="400" text-anchor="middle" >18:30</text>
<line x1="2144.0" y1="881.8" x2="2144.0" y2="1103" stroke="#DDDEE3" stroke-width="1" />
<text x="2144.0" y="1122.3" font-size="14" fill="#3B4149" stroke="#3B4149" stroke-width="0.35" font-weight="400" text-anchor="middle" >18:31</text>
<line x1="2264.8" y1="881.8" x2="2264.8" y2="1103" stroke="#DDDEE3" stroke-width="1" />
<text x="2264.8" y="1122.3" font-size="14" fill="#3B4149" stroke="#3B4149" stroke-width="0.35" font-weight="400" text-anchor="middle" >18:32</text>
<line x1="2385.6" y1="881.8" x2="2385.6" y2="1103" stroke="#DDDEE3" stroke-width="1" />
<text x="2385.6" y="1122.3" font-size="14" fill="#3B4149" stroke="#3B4149" stroke-width="0.35" font-weight="400" text-anchor="middle" >18:33</text>
<polyline points="1867.4,918.1 1902.4,921.5 2023.2,918.1 2144.0,917.5 2264.8,911.9 2385.6,914.2" fill="none" stroke="#F29191" stroke-width="1.3" stroke-linejoin="round" />
<polyline points="1867.4,939.8 1902.4,943.2 2023.2,941.5 2144.0,948.6 2264.8,944.0 2385.6,938.4" fill="none" stroke="#E24D42" stroke-width="1.3" stroke-linejoin="round" />
<polyline points="1867.4,961.5 1902.4,963.2 2023.2,961.8 2144.0,968.6 2264.8,966.3 2385.6,959.3" fill="none" stroke="#1F78C1" stroke-width="1.3" stroke-linejoin="round" />
<polyline points="1867.4,978.2 1902.4,972.8 2023.2,975.1 2144.0,973.9 2264.8,994.2 2385.6,993.1" fill="none" stroke="#E5A8E2" stroke-width="1.3" stroke-linejoin="round" />
<polyline points="1867.4,982.1 1902.4,983.5 2023.2,982.7 2144.0,982.7 2264.8,981.5 2385.6,981.3" fill="none" stroke="#82B5D8" stroke-width="1.3" stroke-linejoin="round" />
<polyline points="1867.4,978.2 1902.4,978.7 2023.2,984.4 2144.0,983.0 2264.8,983.5 2385.6,983.5" fill="none" stroke="#BA43A9" stroke-width="1.3" stroke-linejoin="round" />
<polyline points="1867.4,1021.0 1902.4,1019.3 2023.2,1021.3 2144.0,1021.3 2264.8,1027.5 2385.6,1025.5" fill="none" stroke="#705DA0" stroke-width="1.3" stroke-linejoin="round" />
<polyline points="1867.4,1033.1 1902.4,1033.4 2023.2,1035.1 2144.0,1035.7 2264.8,1034.8 2385.6,1033.4" fill="none" stroke="#AEA2E0" stroke-width="1.3" stroke-linejoin="round" />
<polyline points="1867.4,1102.3 1902.4,1102.3 2023.2,1102.3 2144.0,1102.3 2264.8,1102.3 2385.6,1102.3" fill="none" stroke="#9A8A78" stroke-width="3" stroke-linejoin="round" />
<polyline points="1867.4,1102.3 1902.4,1102.3 2023.2,1102.3 2144.0,1102.3 2264.8,1102.3 2385.6,1102.3" fill="none" stroke="#F5AD7C" stroke-width="1.2" stroke-linejoin="round" />
<text x="1387.2" y="847.8" font-size="16.3" fill="#9FA3AA" stroke="#9FA3AA" stroke-width="0" font-weight="700" text-anchor="start" >Disk I/O</text>
<line x1="1150.4" y1="881.8" x2="1747" y2="881.8" stroke="#DDDEE3" stroke-width="1" />
<text x="1143.2" y="885.8" font-size="14.4" fill="#3B4149" stroke="#3B4149" stroke-width="0.35" font-weight="400" text-anchor="end" word-spacing="0.9">600.0 kB/s</text>
<line x1="1150.4" y1="918.2" x2="1747" y2="918.2" stroke="#DDDEE3" stroke-width="1" />
<text x="1143.2" y="922.2" font-size="14.4" fill="#3B4149" stroke="#3B4149" stroke-width="0.35" font-weight="400" text-anchor="end" word-spacing="0.9">500.0 kB/s</text>
<line x1="1150.4" y1="955.5" x2="1747" y2="955.5" stroke="#DDDEE3" stroke-width="1" />
<text x="1143.2" y="959.5" font-size="14.4" fill="#3B4149" stroke="#3B4149" stroke-width="0.35" font-weight="400" text-anchor="end" word-spacing="0.9">400.0 kB/s</text>
<line x1="1150.4" y1="991.7" x2="1747" y2="991.7" stroke="#DDDEE3" stroke-width="1" />
<text x="1143.2" y="995.7" font-size="14.4" fill="#3B4149" stroke="#3B4149" stroke-width="0.35" font-weight="400" text-anchor="end" word-spacing="0.9">300.0 kB/s</text>
<line x1="1150.4" y1="1029.3" x2="1747" y2="1029.3" stroke="#DDDEE3" stroke-width="1" />
<text x="1143.2" y="1033.3" font-size="14.4" fill="#3B4149" stroke="#3B4149" stroke-width="0.35" font-weight="400" text-anchor="end" word-spacing="0.9">200.0 kB/s</text>
<line x1="1150.4" y1="1065.5" x2="1747" y2="1065.5" stroke="#DDDEE3" stroke-width="1" />
<text x="1143.2" y="1069.5" font-size="14.4" fill="#3B4149" stroke="#3B4149" stroke-width="0.35" font-weight="400" text-anchor="end" word-spacing="0.9">100.0 kB/s</text>
<line x1="1150.4" y1="1103" x2="1747" y2="1103" stroke="#DDDEE3" stroke-width="1" />
<text x="1143.2" y="1107.0" font-size="14.4" fill="#3B4149" stroke="#3B4149" stroke-width="0.35" font-weight="400" text-anchor="end" word-spacing="0.9">0 B/s</text>
<line x1="1185.6" y1="881.8" x2="1185.6" y2="1103" stroke="#DDDEE3" stroke-width="1" />
<text x="1185.6" y="1122.3" font-size="14" fill="#3B4149" stroke="#3B4149" stroke-width="0.35" font-weight="400" text-anchor="middle" >18:29</text>
<line x1="1304.8" y1="881.8" x2="1304.8" y2="1103" stroke="#DDDEE3" stroke-width="1" />
<text x="1304.8" y="1122.3" font-size="14" fill="#3B4149" stroke="#3B4149" stroke-width="0.35" font-weight="400" text-anchor="middle" >18:30</text>
<line x1="1424.0" y1="881.8" x2="1424.0" y2="1103" stroke="#DDDEE3" stroke-width="1" />
<text x="1424.0" y="1122.3" font-size="14" fill="#3B4149" stroke="#3B4149" stroke-width="0.35" font-weight="400" text-anchor="middle" >18:31</text>
<line x1="1543.1999999999998" y1="881.8" x2="1543.1999999999998" y2="1103" stroke="#DDDEE3" stroke-width="1" />
<text x="1543.1999999999998" y="1122.3" font-size="14" fill="#3B4149" stroke="#3B4149" stroke-width="0.35" font-weight="400" text-anchor="middle" >18:32</text>
<line x1="1662.3999999999999" y1="881.8" x2="1662.3999999999999" y2="1103" stroke="#DDDEE3" stroke-width="1" />
<text x="1662.3999999999999" y="1122.3" font-size="14" fill="#3B4149" stroke="#3B4149" stroke-width="0.35" font-weight="400" text-anchor="middle" >18:33</text>
<polyline points="1150.4,911.0 1185.6,912.6 1304.8,920.0 1424.0,927.0 1543.2,930.0 1662.4,932.0" fill="none" stroke="#E24D42" stroke-width="1.3" stroke-linejoin="round" />
<polyline points="1150.4,924.1 1185.6,924.7 1304.8,931.8 1424.0,941.0 1543.2,945.0 1662.4,948.0" fill="none" stroke="#1F78C1" stroke-width="1.3" stroke-linejoin="round" />
<polyline points="1150.4,947.4 1185.6,944.7 1304.8,946.6 1424.0,942.5 1543.2,944.0 1662.4,945.0" fill="none" stroke="#705DA0" stroke-width="1.3" stroke-linejoin="round" />
<polyline points="1150.4,962.0 1185.6,962.0 1304.8,962.0 1424.0,962.0 1543.2,962.0 1662.4,962.0" fill="none" stroke="#EAB839" stroke-width="1.3" stroke-linejoin="round" />
<polyline points="1150.4,1012.4 1185.6,1012.4 1304.8,1012.4 1424.0,1012.4 1543.2,1012.4 1662.4,1012.4" fill="none" stroke="#6ED0E0" stroke-width="1.3" stroke-linejoin="round" />
<polyline points="1150.4,1053.5 1185.6,1049.7 1304.8,1050.2 1424.0,1048.0 1543.2,1061.7 1662.4,1061.2" fill="none" stroke="#BA43A9" stroke-width="1.3" stroke-linejoin="round" />
<polyline points="1150.4,1061.7 1185.6,1061.7 1304.8,1061.7 1424.0,1061.7 1543.2,1061.7 1662.4,1061.7" fill="none" stroke="#7EB26D" stroke-width="1.3" stroke-linejoin="round" />
<polyline points="1150.4,1063.4 1185.6,1063.4 1304.8,1063.4 1424.0,1063.4 1543.2,1063.4 1662.4,1063.4" fill="none" stroke="#EF843C" stroke-width="1.3" stroke-linejoin="round" />
<text x="1418.6" y="514.5" font-size="16.3" fill="#343A42" stroke="#343A42" stroke-width="0" font-weight="700" text-anchor="middle" >Load Average</text>
<polyline points="1481.6,508.3 1485.2,511.9 1488.8,508.3" fill="none" stroke="#50565E" stroke-width="1.3"/>
<line x1="1117" y1="548.6" x2="1747" y2="548.6" stroke="#DDDEE3" stroke-width="1" />
<text x="1109.8" y="552.6" font-size="14.4" fill="#3B4149" stroke="#3B4149" stroke-width="0.35" font-weight="400" text-anchor="end" word-spacing="0.9">2</text>
<line x1="1117" y1="603.8" x2="1747" y2="603.8" stroke="#DDDEE3" stroke-width="1" />
<text x="1109.8" y="607.8" font-size="14.4" fill="#3B4149" stroke="#3B4149" stroke-width="0.35" font-weight="400" text-anchor="end" word-spacing="0.9">1.50</text>
<line x1="1117" y1="658.8" x2="1747" y2="658.8" stroke="#DDDEE3" stroke-width="1" />
<text x="1109.8" y="662.8" font-size="14.4" fill="#3B4149" stroke="#3B4149" stroke-width="0.35" font-weight="400" text-anchor="end" word-spacing="0.9">1</text>
<line x1="1117" y1="713.6" x2="1747" y2="713.6" stroke="#DDDEE3" stroke-width="1" />
<text x="1109.8" y="717.6" font-size="14.4" fill="#3B4149" stroke="#3B4149" stroke-width="0.35" font-weight="400" text-anchor="end" word-spacing="0.9">0.500</text>
<line x1="1117" y1="769.9" x2="1747" y2="769.9" stroke="#DDDEE3" stroke-width="1" />
<text x="1109.8" y="773.9" font-size="14.4" fill="#3B4149" stroke="#3B4149" stroke-width="0.35" font-weight="400" text-anchor="end" word-spacing="0.9">0</text>
<line x1="1153.5" y1="548.6" x2="1153.5" y2="769.9" stroke="#DDDEE3" stroke-width="1" />
<text x="1153.5" y="790.3" font-size="14" fill="#3B4149" stroke="#3B4149" stroke-width="0.35" font-weight="400" text-anchor="middle" >18:29</text>
<line x1="1279.5" y1="548.6" x2="1279.5" y2="769.9" stroke="#DDDEE3" stroke-width="1" />
<text x="1279.5" y="790.3" font-size="14" fill="#3B4149" stroke="#3B4149" stroke-width="0.35" font-weight="400" text-anchor="middle" >18:30</text>
<line x1="1405.5" y1="548.6" x2="1405.5" y2="769.9" stroke="#DDDEE3" stroke-width="1" />
<text x="1405.5" y="790.3" font-size="14" fill="#3B4149" stroke="#3B4149" stroke-width="0.35" font-weight="400" text-anchor="middle" >18:31</text>
<line x1="1531.5" y1="548.6" x2="1531.5" y2="769.9" stroke="#DDDEE3" stroke-width="1" />
<text x="1531.5" y="790.3" font-size="14" fill="#3B4149" stroke="#3B4149" stroke-width="0.35" font-weight="400" text-anchor="middle" >18:32</text>
<line x1="1657.5" y1="548.6" x2="1657.5" y2="769.9" stroke="#DDDEE3" stroke-width="1" />
<text x="1657.5" y="790.3" font-size="14" fill="#3B4149" stroke="#3B4149" stroke-width="0.35" font-weight="400" text-anchor="middle" >18:33</text>
<polyline points="1117.0,574.4 1153.5,575.8 1279.5,579.0 1405.5,587.8 1531.5,590.0 1657.5,594.4" fill="none" stroke="#508642" stroke-width="1.3" stroke-linejoin="round" />
<polyline points="1117.0,601.0 1153.5,604.5 1279.5,607.8 1405.5,630.0 1531.5,630.0 1657.5,634.4" fill="none" stroke="#7EB26D" stroke-width="1.3" stroke-linejoin="round" />
<polyline points="1117.0,668.4 1153.5,669.8 1279.5,673.0 1405.5,677.0 1531.5,680.0 1657.5,682.0" fill="none" stroke="#447EBF" stroke-width="1.3" stroke-linejoin="round" />
<polyline points="1117.0,679.0 1153.5,680.7 1279.5,667.6 1405.5,671.0 1531.5,676.0 1657.5,678.0" fill="none" stroke="#C15C17" stroke-width="1.3" stroke-linejoin="round" />
<polyline points="1117.0,698.8 1153.5,699.6 1279.5,699.6 1405.5,691.0 1531.5,688.0 1657.5,686.0" fill="none" stroke="#CCA300" stroke-width="1.3" stroke-linejoin="round" />
<polyline points="1117.0,653.6 1153.5,658.5 1279.5,670.9 1405.5,680.0 1531.5,684.0 1657.5,686.0" fill="none" stroke="#6ED0E0" stroke-width="1.3" stroke-linejoin="round" />
<polyline points="1117.0,687.3 1153.5,689.5 1279.5,690.9 1405.5,678.0 1531.5,666.0 1657.5,660.8" fill="none" stroke="#EAB839" stroke-width="1.3" stroke-linejoin="round" />
<polyline points="1117.0,687.3 1153.5,705.1 1279.5,717.5 1405.5,726.0 1531.5,730.0 1657.5,732.0" fill="none" stroke="#BA43A9" stroke-width="1.3" stroke-linejoin="round" />
<polyline points="1117.0,678.5 1153.5,682.6 1279.5,645.4 1405.5,659.5 1531.5,665.0 1657.5,677.0" fill="none" stroke="#EF843C" stroke-width="1.3" stroke-linejoin="round" />
<polyline points="1117.0,647.0 1153.5,652.0 1279.5,640.2 1405.5,700.6 1531.5,662.8 1657.5,647.7" fill="none" stroke="#E24D42" stroke-width="1.3" stroke-linejoin="round" />
<polyline points="1117.0,714.0 1153.5,719.6 1279.5,701.6 1405.5,640.7 1531.5,626.4 1657.5,636.6" fill="none" stroke="#1F78C1" stroke-width="1.3" stroke-linejoin="round" />
<polyline points="1117.0,739.4 1153.5,746.2 1279.5,616.0 1405.5,680.0 1531.5,690.0 1657.5,695.0" fill="none" stroke="#705DA0" stroke-width="1.3" stroke-linejoin="round" />
<circle cx="1279.5" cy="579" r="3.3" fill="none" stroke="#508642" stroke-opacity="0.6" stroke-width="1.3"/>
<circle cx="1279.5" cy="607.8" r="3.3" fill="none" stroke="#7EB26D" stroke-opacity="0.6" stroke-width="1.3"/>
<circle cx="1279.5" cy="673" r="3.3" fill="none" stroke="#447EBF" stroke-opacity="0.6" stroke-width="1.3"/>
<circle cx="1279.5" cy="667.6" r="3.3" fill="none" stroke="#C15C17" stroke-opacity="0.6" stroke-width="1.3"/>
<circle cx="1279.5" cy="699.6" r="3.3" fill="none" stroke="#CCA300" stroke-opacity="0.6" stroke-width="1.3"/>
<circle cx="1279.5" cy="670.9" r="3.3" fill="none" stroke="#6ED0E0" stroke-opacity="0.6" stroke-width="1.3"/>
<circle cx="1279.5" cy="690.9" r="3.3" fill="none" stroke="#EAB839" stroke-opacity="0.6" stroke-width="1.3"/>
<circle cx="1279.5" cy="717.5" r="3.3" fill="none" stroke="#BA43A9" stroke-opacity="0.6" stroke-width="1.3"/>
<circle cx="1279.5" cy="645.4" r="3.3" fill="none" stroke="#EF843C" stroke-opacity="0.6" stroke-width="1.3"/>
<circle cx="1279.5" cy="640.2" r="3.3" fill="none" stroke="#E24D42" stroke-opacity="0.6" stroke-width="1.3"/>
<circle cx="1279.5" cy="701.6" r="3.3" fill="none" stroke="#1F78C1" stroke-opacity="0.6" stroke-width="1.3"/>
<circle cx="1279.5" cy="616" r="3.3" fill="none" stroke="#705DA0" stroke-opacity="0.6" stroke-width="1.3"/>
<line x1="1378" y1="548.5" x2="1378" y2="770" stroke="#C46870" stroke-width="1.6" />
<rect x="1389" y="671" width="308" height="311" rx="7" fill="#D9DEE8"/>
<text x="1543" y="695" font-size="15" fill="#2B3138" stroke="#2B3138" stroke-width="0" font-weight="700" text-anchor="middle" >2021-10-11 18:30:00</text>
<rect x="1404" y="714.0" width="12" height="3" rx="1" fill="#7EB26D"/>
<text x="1420" y="720.5" font-size="14.8" fill="#2B3138" stroke="#2B3138" stroke-width="0.35" font-weight="400" text-anchor="start" >Load[5m] (10.84.102.2:9796):</text>
<text x="1684.5" y="720.5" font-size="14.8" fill="#2B3138" stroke="#2B3138" stroke-width="0" font-weight="700" text-anchor="end" >1.46</text>
<rect x="1404" y="736.0" width="12" height="3" rx="1" fill="#EAB839"/>
<text x="1420" y="742.5" font-size="14.8" fill="#2B3138" stroke="#2B3138" stroke-width="0.35" font-weight="400" text-anchor="start" >Load[5m] (10.84.102.3:9796):</text>
<text x="1684.5" y="742.5" font-size="14.8" fill="#2B3138" stroke="#2B3138" stroke-width="0" font-weight="700" text-anchor="end" >0.710</text>
<rect x="1404" y="758.0" width="12" height="3" rx="1" fill="#6ED0E0"/>
<text x="1420" y="764.5" font-size="14.8" fill="#2B3138" stroke="#2B3138" stroke-width="0.35" font-weight="400" text-anchor="start" >Load[5m] (10.84.102.4:9796):</text>
<text x="1684.5" y="764.5" font-size="14.8" fill="#2B3138" stroke="#2B3138" stroke-width="0" font-weight="700" text-anchor="end" >0.900</text>
<rect x="1404" y="780.0" width="12" height="3" rx="1" fill="#EF843C"/>
<text x="1420" y="786.5" font-size="14.8" fill="#141419" stroke="#141419" stroke-width="0" font-weight="700" text-anchor="start" >Load[5m] (10.84.102.5:9796):</text>
<text x="1684.5" y="786.5" font-size="14.8" fill="#2B3138" stroke="#2B3138" stroke-width="0" font-weight="700" text-anchor="end" >1.12</text>
<rect x="1404" y="802.0" width="12" height="3" rx="1" fill="#E24D42"/>
<text x="1420" y="808.5" font-size="14.8" fill="#2B3138" stroke="#2B3138" stroke-width="0.35" font-weight="400" text-anchor="start" >Load[1m] (10.84.102.2:9796):</text>
<text x="1684.5" y="808.5" font-size="14.8" fill="#2B3138" stroke="#2B3138" stroke-width="0" font-weight="700" text-anchor="end" >1.17</text>
<rect x="1404" y="824.0" width="12" height="3" rx="1" fill="#1F78C1"/>
<text x="1420" y="830.5" font-size="14.8" fill="#2B3138" stroke="#2B3138" stroke-width="0.35" font-weight="400" text-anchor="start" >Load[1m] (10.84.102.3:9796):</text>
<text x="1684.5" y="830.5" font-size="14.8" fill="#2B3138" stroke="#2B3138" stroke-width="0" font-weight="700" text-anchor="end" >0.610</text>
<rect x="1404" y="846.0" width="12" height="3" rx="1" fill="#BA43A9"/>
<text x="1420" y="852.5" font-size="14.8" fill="#2B3138" stroke="#2B3138" stroke-width="0.35" font-weight="400" text-anchor="start" >Load[1m] (10.84.102.4:9796):</text>
<text x="1684.5" y="852.5" font-size="14.8" fill="#2B3138" stroke="#2B3138" stroke-width="0" font-weight="700" text-anchor="end" >0.470</text>
<rect x="1404" y="868.0" width="12" height="3" rx="1" fill="#705DA0"/>
<text x="1420" y="874.5" font-size="14.8" fill="#2B3138" stroke="#2B3138" stroke-width="0.35" font-weight="400" text-anchor="start" >Load[1m] (10.84.102.5:9796):</text>
<text x="1684.5" y="874.5" font-size="14.8" fill="#2B3138" stroke="#2B3138" stroke-width="0" font-weight="700" text-anchor="end" >1.39</text>
<rect x="1404" y="890.0" width="12" height="3" rx="1" fill="#508642"/>
<text x="1420" y="896.5" font-size="14.8" fill="#2B3138" stroke="#2B3138" stroke-width="0.35" font-weight="400" text-anchor="start" >Load[15m] (10.84.102.2:9796):</text>
<text x="1684.5" y="896.5" font-size="14.8" fill="#2B3138" stroke="#2B3138" stroke-width="0" font-weight="700" text-anchor="end" >1.72</text>
<rect x="1404" y="912.0" width="12" height="3" rx="1" fill="#CCA300"/>
<text x="1420" y="918.5" font-size="14.8" fill="#2B3138" stroke="#2B3138" stroke-width="0.35" font-weight="400" text-anchor="start" >Load[15m] (10.84.102.3:9796):</text>
<text x="1684.5" y="918.5" font-size="14.8" fill="#2B3138" stroke="#2B3138" stroke-width="0" font-weight="700" text-anchor="end" >0.630</text>
<rect x="1404" y="934.0" width="12" height="3" rx="1" fill="#447EBF"/>
<text x="1420" y="940.5" font-size="14.8" fill="#2B3138" stroke="#2B3138" stroke-width="0.35" font-weight="400" text-anchor="start" >Load[15m] (10.84.102.4:9796):</text>
<text x="1684.5" y="940.5" font-size="14.8" fill="#2B3138" stroke="#2B3138" stroke-width="0" font-weight="700" text-anchor="end" >0.870</text>
<rect x="1404" y="956.0" width="12" height="3" rx="1" fill="#C15C17"/>
<text x="1420" y="962.5" font-size="14.8" fill="#2B3138" stroke="#2B3138" stroke-width="0.35" font-weight="400" text-anchor="start" >Load[15m] (10.84.102.5:9796):</text>
<text x="1684.5" y="962.5" font-size="14.8" fill="#2B3138" stroke="#2B3138" stroke-width="0" font-weight="700" text-anchor="end" >0.920</text>
</svg>
</body></html>
